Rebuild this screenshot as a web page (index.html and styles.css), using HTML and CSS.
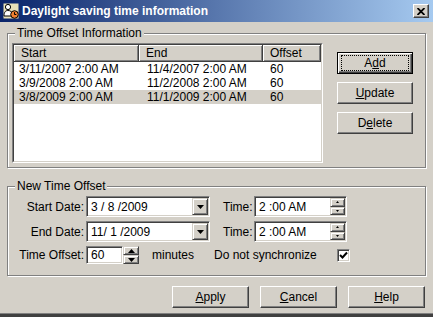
FILE: index.html
```html
<!DOCTYPE html>
<html lang="en">
<head>
    <meta charset="UTF-8">
    <title>Daylight saving time information</title>
    <link rel="stylesheet" href="styles.css">
</head>
<body>

    <div class="dialog">
        <div class="titlebar">
            <svg class="app-icon" width="16" height="16" viewBox="0 0 16 16">
                <rect x="0.5" y="0.5" width="15" height="15" fill="#e8e0b8"/>
                <circle cx="5" cy="4" r="2.6" fill="#fff" stroke="#000" stroke-width="1"/>
                <path d="M1 13 C1 8.5 3 7.5 5 7.5 C7 7.5 9 8.5 9 11 L9 13 Z" fill="#fff" stroke="#000" stroke-width="1"/>
                <circle cx="11.5" cy="11.5" r="3.8" fill="#f08030" stroke="#000" stroke-width="1"/>
                <path d="M11.5 9.2 L11.5 11.5 L13.3 11.5" fill="none" stroke="#000" stroke-width="1"/>
            </svg>
            <span class="title">Daylight saving time information</span>
            <span class="close-btn">
                <svg width="8" height="7" viewBox="0 0 8 7">
                    <path d="M0.5 0 L7.5 7 M7.5 0 L0.5 7" stroke="#000" stroke-width="1.8"/>
                </svg>
            </span>
        </div>

        <div class="client">
            <fieldset class="group group-info">
                <legend>Time Offset Information</legend>
                <div class="info-body">
                    <div class="listview">
                        <div class="listview-inner">
                            <div class="lv-header">
                                <div class="lv-head c-start">Start</div>
                                <div class="lv-head c-end">End</div>
                                <div class="lv-head c-offset">Offset</div>
                            </div>
                            <div class="lv-row">
                                <span class="c-start">3/11/2007 2:00 AM</span>
                                <span class="c-end">11/4/2007 2:00 AM</span>
                                <span class="c-offset">60</span>
                            </div>
                            <div class="lv-row">
                                <span class="c-start">3/9/2008 2:00 AM</span>
                                <span class="c-end">11/2/2008 2:00 AM</span>
                                <span class="c-offset">60</span>
                            </div>
                            <div class="lv-row selected">
                                <span class="c-start">3/8/2009 2:00 AM</span>
                                <span class="c-end">11/1/2009 2:00 AM</span>
                                <span class="c-offset">60</span>
                            </div>
                        </div>
                    </div>

                    <div class="side-buttons">
                        <button class="btn btn-default"><span class="focus">A<u>d</u>d</span></button>
                        <button class="btn"><u>U</u>pdate</button>
                        <button class="btn">D<u>e</u>lete</button>
                    </div>
                </div>
            </fieldset>

            <fieldset class="group group-new">
                <legend>New Time Offset</legend>

                <div class="form-row">
                    <span class="field-label">Start Date:</span>
                    <div class="field combo">
                        <span class="field-text">3 / 8 /2009</span>
                        <span class="drop-btn">
                            <svg width="7" height="4" viewBox="0 0 7 4"><path d="M0 0 L7 0 L3.5 4 Z" fill="#000"/></svg>
                        </span>
                    </div>
                    <span class="time-label">Time:</span>
                    <div class="field time-box">
                        <span class="field-text">2 :00 AM</span>
                        <span class="mini-spin">
                            <span class="spin-btn"><svg width="3" height="2" viewBox="0 0 3 2"><path d="M0 2 L3 2 L1.5 0 Z" fill="#000"/></svg></span>
                            <span class="spin-btn"><svg width="3" height="2" viewBox="0 0 3 2"><path d="M0 0 L3 0 L1.5 2 Z" fill="#000"/></svg></span>
                        </span>
                    </div>
                </div>

                <div class="form-row">
                    <span class="field-label">End Date:</span>
                    <div class="field combo">
                        <span class="field-text">11/ 1 /2009</span>
                        <span class="drop-btn">
                            <svg width="7" height="4" viewBox="0 0 7 4"><path d="M0 0 L7 0 L3.5 4 Z" fill="#000"/></svg>
                        </span>
                    </div>
                    <span class="time-label">Time:</span>
                    <div class="field time-box">
                        <span class="field-text">2 :00 AM</span>
                        <span class="mini-spin">
                            <span class="spin-btn"><svg width="3" height="2" viewBox="0 0 3 2"><path d="M0 2 L3 2 L1.5 0 Z" fill="#000"/></svg></span>
                            <span class="spin-btn"><svg width="3" height="2" viewBox="0 0 3 2"><path d="M0 0 L3 0 L1.5 2 Z" fill="#000"/></svg></span>
                        </span>
                    </div>
                </div>

                <div class="form-row row-offset">
                    <span class="field-label">Time Offset:</span>
                    <div class="field offset-box">
                        <span class="field-text">60</span>
                    </div>
                    <span class="updown">
                        <span class="spin-btn"><svg width="7" height="4" viewBox="0 0 7 4"><path d="M0 4 L7 4 L3.5 0 Z" fill="#000"/></svg></span>
                        <span class="spin-btn"><svg width="7" height="4" viewBox="0 0 7 4"><path d="M0 0 L7 0 L3.5 4 Z" fill="#000"/></svg></span>
                    </span>
                    <span class="minutes">minutes</span>
                    <span class="sync-label">Do not synchronize</span>
                    <span class="checkbox">
                        <svg width="9" height="9" viewBox="0 0 9 9"><path d="M1 4 L3.5 6.5 L8 1.5" fill="none" stroke="#000" stroke-width="2"/></svg>
                    </span>
                </div>
            </fieldset>

            <div class="footer-buttons">
                <button class="btn btn-wide"><u>A</u>pply</button>
                <button class="btn btn-wide"><u>C</u>ancel</button>
                <button class="btn btn-wide"><u>H</u>elp</button>
            </div>
        </div>
    </div>

</body>
</html>
```

FILE: styles.css
```css
body {
    margin: 0;
    background-color: #d4d0c8;
    font-family: "Liberation Sans", Arial, sans-serif;
    font-size: 12px;
    color: black;
}

.dialog {
    width: 433px;
    height: 317px;
    box-sizing: border-box;
    background: #d4d0c8;
    border-bottom: 3px solid #404040;
    display: flex;
    flex-direction: column;
}

/* title bar */
.titlebar {
    height: 22px;
    flex-shrink: 0;
    display: flex;
    align-items: center;
    padding: 0 4px 0 3px;
    background: linear-gradient(to right, #0a246a, #a6caf0);
    color: white;
    font-weight: bold;
}

.app-icon {
    margin-right: 3px;
}

.title {
    flex: 1;
}

.close-btn {
    width: 16px;
    height: 14px;
    box-sizing: border-box;
    display: flex;
    align-items: center;
    justify-content: center;
    background: #d4d0c8;
    border: 1px solid;
    border-color: #fff #404040 #404040 #fff;
    box-shadow: inset -1px -1px #808080;
}

.client {
    flex: 1;
    padding: 5px 7px 0 7px;
    border-bottom: 1px solid #808080;
}

/* group boxes */
.group {
    margin: 0;
    min-width: 0;
    border: 1px solid #808080;
    box-shadow: inset 1px 1px #fff, 1px 1px #fff;
}

.group legend {
    padding: 0 2px;
    line-height: 13px;
    background: #d4d0c8;
}

.group-info {
    padding: 3px 10px 4px 4px;
}

.group-info legend {
    margin-left: 3px;
}

.info-body {
    display: flex;
}

/* list view */
.listview {
    width: 311px;
    height: 120px;
    box-sizing: border-box;
    border: 1px solid;
    border-color: #808080 #fff #fff #808080;
    background: #fff;
}

.listview-inner {
    height: 100%;
    box-sizing: border-box;
    border: 1px solid;
    border-color: #404040 #d4d0c8 #d4d0c8 #404040;
}

.lv-header {
    display: flex;
    height: 17px;
    background: #d4d0c8;
}

.lv-head {
    box-sizing: border-box;
    padding-left: 7px;
    line-height: 16px;
    box-shadow: inset -1px -1px #404040, inset 1px 1px #fff, inset -2px -2px #808080;
}

.lv-row {
    display: flex;
    height: 14px;
    line-height: 14px;
}

.lv-row.selected {
    background: #d4d0c8;
}

.lv-row span {
    box-sizing: border-box;
    white-space: nowrap;
}

.lv-row .c-start {
    padding-left: 5px;
}

.lv-row .c-end {
    padding-left: 8px;
}

.lv-row .c-offset {
    padding-left: 7px;
}

.c-start {
    width: 125px;
}

.c-end {
    width: 124px;
}

.c-offset {
    width: 58px;
}

/* buttons */
.side-buttons {
    display: flex;
    flex-direction: column;
    gap: 8px;
    padding-top: 9px;
    margin-left: 14px;
}

.btn {
    box-sizing: border-box;
    width: 76px;
    height: 22px;
    padding: 0;
    font: inherit;
    color: black;
    background: #d4d0c8;
    border: 1px solid;
    border-color: #fff #404040 #404040 #fff;
    box-shadow: inset -1px -1px #808080;
}

.btn-default {
    border: 1px solid #000;
    box-shadow: inset 1px 1px #fff, inset -1px -1px #404040, inset -2px -2px #808080;
}

.btn-default .focus {
    display: block;
    margin: 2px 3px;
    height: 16px;
    line-height: 14px;
    box-sizing: border-box;
    border: 1px dotted #000;
}

.btn-wide {
    width: 77px;
}

/* new offset form */
.group-new {
    margin-top: 12px;
    padding: 3px 0 11px 0;
}

.group-new legend {
    margin-left: 7px;
}

.form-row {
    display: flex;
    align-items: center;
    height: 21px;
    margin-bottom: 4px;
}

.form-row.row-offset {
    height: 18px;
    margin-bottom: 0;
}

.field-label {
    width: 76px;
    margin-right: 2px;
    text-align: right;
    white-space: nowrap;
}

.field {
    box-sizing: border-box;
    height: 21px;
    display: flex;
    align-items: center;
    background: #fff;
    border: 1px solid;
    border-color: #808080 #fff #fff #808080;
    box-shadow: inset 1px 1px #404040, inset -1px -1px #d4d0c8;
}

.field-text {
    flex: 1;
    padding-left: 4px;
    white-space: nowrap;
}

.combo {
    width: 124px;
}

.drop-btn {
    width: 16px;
    height: 17px;
    margin-right: 1px;
    box-sizing: border-box;
    display: flex;
    align-items: center;
    justify-content: center;
    background: #d4d0c8;
    border: 1px solid;
    border-color: #d4d0c8 #404040 #404040 #d4d0c8;
    box-shadow: inset 1px 1px #fff, inset -1px -1px #808080;
}

.time-label {
    width: 44px;
    box-sizing: border-box;
    padding-left: 13px;
    white-space: nowrap;
}

.time-box {
    width: 93px;
}

.mini-spin {
    display: flex;
    flex-direction: column;
    width: 15px;
    height: 17px;
    margin-right: 1px;
}

.spin-btn {
    flex: 1;
    box-sizing: border-box;
    display: flex;
    align-items: center;
    justify-content: center;
    background: #d4d0c8;
    border: 1px solid;
    border-color: #d4d0c8 #404040 #404040 #d4d0c8;
    box-shadow: inset 1px 1px #fff, inset -1px -1px #808080;
}

.offset-box {
    width: 37px;
    height: 18px;
}

.updown {
    display: flex;
    flex-direction: column;
    width: 16px;
    height: 18px;
}

.minutes {
    width: 62px;
    margin-left: 13px;
}

.sync-label {
    width: 123px;
    white-space: nowrap;
}

.checkbox {
    width: 13px;
    height: 13px;
    box-sizing: border-box;
    display: flex;
    align-items: center;
    justify-content: center;
    background: #fff;
    border: 1px solid;
    border-color: #808080 #fff #fff #808080;
    box-shadow: inset 1px 1px #404040, inset -1px -1px #d4d0c8;
}

.footer-buttons {
    display: flex;
    justify-content: flex-end;
    gap: 11px;
    margin-top: 10px;
    margin-right: 1px;
}
```
